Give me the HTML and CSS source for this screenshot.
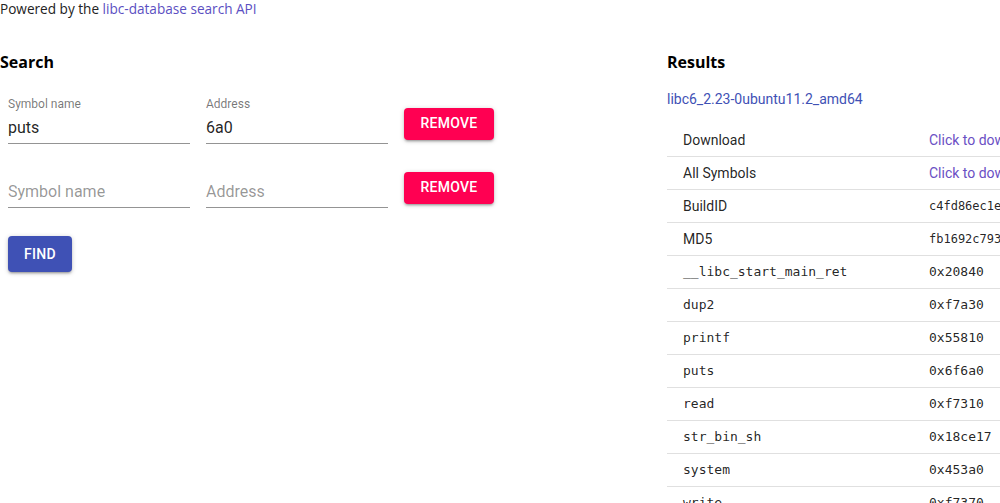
FILE: index.html
```html
<!DOCTYPE html>
<html>
<head>
<meta charset="utf-8">
<link rel="stylesheet" href="styles.css">
</head>
<body>
<div class="top">Powered by the <a class="link" href="#">libc-database search API</a></div>
<div class="main">
  <section class="left">
    <h2 class="heading">Search</h2>
    <div class="form-row">
      <div class="field">
        <label class="label">Symbol name</label>
        <div class="input">puts</div>
      </div>
      <div class="field">
        <label class="label">Address</label>
        <div class="input">6a0</div>
      </div>
      <button class="btn btn-remove">REMOVE</button>
    </div>
    <div class="form-row">
      <div class="field">
        <div class="input placeholder">Symbol name</div>
      </div>
      <div class="field">
        <div class="input placeholder">Address</div>
      </div>
      <button class="btn btn-remove">REMOVE</button>
    </div>
    <button class="btn btn-find">FIND</button>
  </section>
  <section class="right">
    <h2 class="heading">Results</h2>
    <a class="libc-link" href="#">libc6_2.23-0ubuntu11.2_amd64</a>
    <table class="results">
      <tr><td class="k">Download</td><td class="v"><a class="dl" href="#">Click to download</a></td></tr>
      <tr><td class="k">All Symbols</td><td class="v"><a class="dl" href="#">Click to download</a></td></tr>
      <tr><td class="k">BuildID</td><td class="v mono hash">c4fd86ec1e6ed1a8b29c5f9f8a53c4e0fa8e2c77</td></tr>
      <tr><td class="k">MD5</td><td class="v mono hash">fb1692c79335b5b4a4d07a6d4a0f4e3b</td></tr>
      <tr><td class="k mono">__libc_start_main_ret</td><td class="v mono">0x20840</td></tr>
      <tr><td class="k mono">dup2</td><td class="v mono">0xf7a30</td></tr>
      <tr><td class="k mono">printf</td><td class="v mono">0x55810</td></tr>
      <tr><td class="k mono">puts</td><td class="v mono">0x6f6a0</td></tr>
      <tr><td class="k mono">read</td><td class="v mono">0xf7310</td></tr>
      <tr><td class="k mono">str_bin_sh</td><td class="v mono">0x18ce17</td></tr>
      <tr><td class="k mono">system</td><td class="v mono">0x453a0</td></tr>
      <tr><td class="k mono">write</td><td class="v mono">0xf7370</td></tr>
    </table>
  </section>
</div>
</body>
</html>
```
FILE: styles.css
```css
html, body {
  margin: 0;
  padding: 0;
  overflow: hidden;
  background: #fff;
}
body {
  font-family: "Open Sans", "Noto Sans", sans-serif;
  color: #222;
  width: 1400px;
}
.top {
  font-size: 13.6px;
  line-height: 18px;
  height: 18px;
}
.link {
  color: #5b4fc2;
  text-decoration: none;
}
.main {
  display: flex;
}
.left {
  width: 667px;
  flex: none;
}
.right {
  width: 700px;
  flex: none;
}
.heading {
  font-family: "Open Sans", sans-serif;
  font-weight: 700;
  font-size: 16px;
  line-height: 24px;
  margin: 32px 0 0 0;
  color: #000;
}
.form-row {
  display: flex;
  align-items: flex-end;
  gap: 16px;
  padding-left: 8px;
  height: 48px;
  margin-top: 22px;
}
.form-row + .form-row {
  margin-top: 16px;
}
.field {
  width: 182px;
  display: flex;
  flex-direction: column;
  justify-content: flex-end;
  font-family: Roboto, sans-serif;
}
.label {
  font-size: 12px;
  line-height: 14px;
  color: rgba(0, 0, 0, 0.54);
  margin-bottom: 1px;
}
.input {
  font-size: 16px;
  line-height: 19px;
  padding: 6px 0 6px 0;
  color: rgba(0, 0, 0, 0.87);
  border-bottom: 1px solid rgba(0, 0, 0, 0.42);
}
.placeholder {
  color: rgba(0, 0, 0, 0.42);
}
.btn {
  font-family: Roboto, sans-serif;
  font-weight: 500;
  font-size: 14px;
  letter-spacing: 0.02em;
  color: #fff;
  border: none;
  border-radius: 4px;
  box-shadow: 0 1px 5px rgba(0,0,0,0.2), 0 2px 2px rgba(0,0,0,0.14), 0 3px 1px -2px rgba(0,0,0,0.12);
  padding: 0 16px;
  cursor: pointer;
}
.btn-remove {
  background: #ff0052;
  width: 90px;
  height: 32px;
  margin-bottom: 4px;
  padding-bottom: 3px;
}
.btn-find {
  display: block;
  background: #3f51b5;
  width: 64px;
  height: 36px;
  margin: 28px 0 0 8px;
}
.libc-link {
  display: block;
  font-family: Roboto, sans-serif;
  font-size: 14px;
  line-height: 18px;
  margin-top: 16px;
  color: #3f51b5;
  text-decoration: none;
}
.results {
  border-collapse: collapse;
  margin-top: 16px;
  width: 700px;
  font-family: Roboto, sans-serif;
  font-size: 14px;
  color: rgba(0, 0, 0, 0.87);
}
.results td {
  height: 31px;
  padding: 0 0 1px 0;
  border-bottom: 1px solid #e0e0e0;
  white-space: nowrap;
}
.results .k {
  width: 246px;
  padding-left: 16px;
}
.mono {
  font-family: "DejaVu Sans Mono", monospace;
  font-size: 13px;
}
.hash {
  font-size: 12px;
}
.dl {
  color: #6a4fc4;
  text-decoration: none;
}
```
